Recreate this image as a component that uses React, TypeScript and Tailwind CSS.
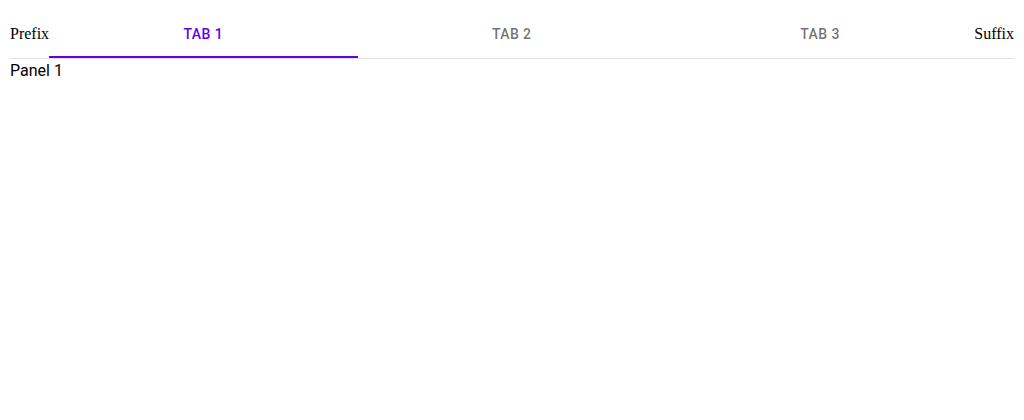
import React, { useState } from "react";

export default function App() {
  const [active, setActive] = useState(0);
  const tabs = ["Tab 1", "Tab 2", "Tab 3"];
  return (
    <div className="p-[10px] bg-white min-h-[420px]">
      <div className="flex items-center border-b border-[#e0e0e0]">
        <span className="text-[16px] text-black font-['Liberation_Serif',serif]">Prefix</span>
        {tabs.map((t, i) => (
          <button
            key={t}
            onClick={() => setActive(i)}
            className={
              i === active
                ? "relative flex-1 h-[48px] flex items-center justify-center uppercase text-[14px] font-medium tracking-[0.03em] font-['Roboto',sans-serif] text-[#6200ee]"
                : "relative flex-1 h-[48px] flex items-center justify-center uppercase text-[14px] font-medium tracking-[0.03em] font-['Roboto',sans-serif] text-[#0000008f]"
            }
          >
            {t}
            {i === active && <span className="absolute left-0 right-0 bottom-0 h-[2px] bg-[#6200ee]" />}
          </button>
        ))}
        <span className="text-[16px] text-black font-['Liberation_Serif',serif]">Suffix</span>
      </div>
      <div className="text-[16px] text-black font-['Roboto',sans-serif]">Panel 1</div>
    </div>
  );
}
